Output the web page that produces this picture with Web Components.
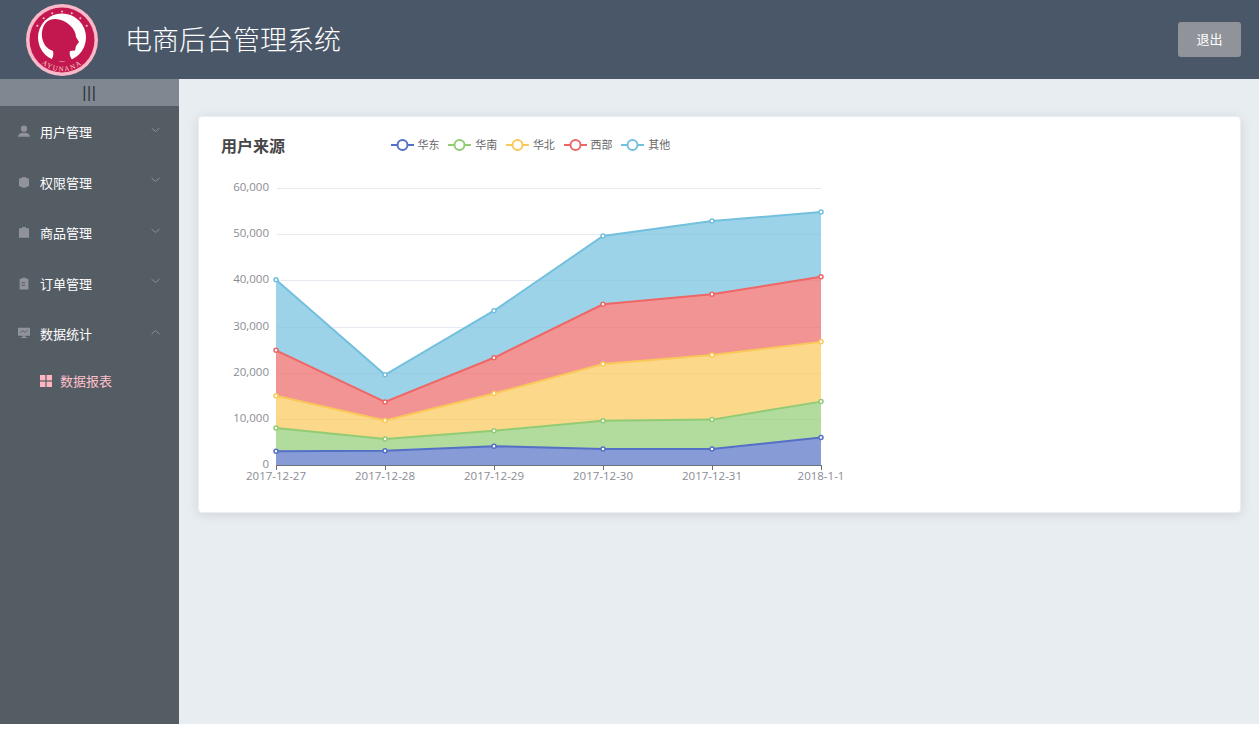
<!DOCTYPE html>
<html lang="zh">
<head>
<meta charset="utf-8">
<title>电商后台管理系统</title>
<style>
    html, body { margin: 0; padding: 0; background: #fff; }
    body { font-family: "Noto Sans CJK SC", "Liberation Sans", sans-serif; }
</style>
</head>
<body>
<admin-app>
    <admin-header slot="header" title="电商后台管理系统"></admin-header>
    <side-nav slot="aside">
        <nav-group icon="user" label="用户管理"></nav-group>
        <nav-group icon="box" label="权限管理"></nav-group>
        <nav-group icon="goods" label="商品管理"></nav-group>
        <nav-group icon="order" label="订单管理"></nav-group>
        <nav-group icon="data" label="数据统计" open>
            <nav-leaf label="数据报表"></nav-leaf>
        </nav-group>
    </side-nav>
    <report-card slot="main" heading="用户来源"></report-card>
</admin-app>

<script>
const CJK = '"Noto Sans CJK SC", "Liberation Sans", sans-serif';

const SERIES = [
    {name: '华东', color: '#5470c6', stack: [3100, 3200, 4200, 3600, 3600, 6100]},
    {name: '华南', color: '#91cc75', stack: [8140, 5760, 7560, 9700, 9960, 13860]},
    {name: '华北', color: '#fac858', stack: [15120, 9750, 15600, 22000, 23950, 26800]},
    {name: '西部', color: '#ee6666', stack: [24970, 13780, 23350, 34940, 37100, 40900]},
    {name: '其他', color: '#73c0de', stack: [40240, 19670, 33550, 49730, 52960, 54910]}
];
const DAYS = ['2017-12-27', '2017-12-28', '2017-12-29', '2017-12-30', '2017-12-31', '2018-1-1'];

const NAV_ICONS = {
    user: '<circle cx="6" cy="3.4" r="3.1"/><path d="M0 11.6c0-2.4 1.8-3.6 4-4.2h4c2.2.6 4 1.8 4 4.2z"/>',
    box: '<path d="M6 .6l5 1.8v7.4l-5 2-5-2V2.4z"/>',
    goods: '<path d="M4.2 2V.8h3.6V2H11v9.6H1V2z"/>',
    order: '<path d="M1.6 1.4h2.2V.4h4.4v1h2.2v10.8H1.6z"/><path d="M3.6 5h3.4v1H3.6zM3.6 7.4h3.4v1H3.6z" fill="#545c64"/>',
    data: '<path d="M0 .6h12v8H7v1.2h2v1H3v-1h2V8.6H0z"/><path d="M2.2 5.4l2.4-2 2.2 1.6 2.8-2.2" fill="none" stroke="#545c64" stroke-width=".9"/>'
};

class AdminApp extends HTMLElement {
    constructor() {
        super();
        this.attachShadow({mode: 'open'});
        this.shadowRoot.innerHTML = `
            <style>
                :host { display: flex; flex-direction: column; height: 724px; }
                .body { display: flex; flex: 1; min-height: 0; }
                .main {
                    flex: 1;
                    background: #e8edf2;
                    padding: 37px 18.5px 0;
                }
            </style>
            <slot name="header"></slot>
            <div class="body">
                <slot name="aside"></slot>
                <div class="main"><slot name="main"></slot></div>
            </div>
        `;
    }
}

class AdminHeader extends HTMLElement {
    constructor() {
        super();
        this.attachShadow({mode: 'open'});
        this.shadowRoot.innerHTML = `
            <style>
                :host {
                    display: flex;
                    align-items: center;
                    height: 79px;
                    background: #4a5768;
                    padding: 0 18px 0 26px;
                    flex: none;
                }
                h1 {
                    margin: 0 0 2px 27px;
                    flex: 1;
                    font: 300 27px/1 ${CJK};
                    color: #fff;
                }
                button {
                    width: 63px;
                    height: 35px;
                    border: none;
                    border-radius: 3px;
                    background: #909399;
                    color: #fff;
                    font: 13px ${CJK};
                    padding: 0 0 3px;
                }
            </style>
            <brand-logo></brand-logo>
            <h1>${this.getAttribute('title')}</h1>
            <button>退出</button>
        `;
    }
}

class BrandLogo extends HTMLElement {
    constructor() {
        super();
        this.attachShadow({mode: 'open'});
        let dots = '';
        for (let a = -60; a <= 60; a += 20) {
            const r = a * Math.PI / 180;
            dots += `<circle cx="${36 + 28.5 * Math.sin(r)}" cy="${36 - 28.5 * Math.cos(r)}" r="1" fill="#f7c9d4"/>`;
        }
        this.shadowRoot.innerHTML = `
            <style>
                :host { display: block; width: 72px; height: 72px; flex: none; }
                svg { display: block; }
                text { font: 7px "Liberation Serif", serif; fill: #f7d7c8; letter-spacing: 1.4px; }
            </style>
            <svg width="72" height="72" viewBox="0 0 72 72">
                <circle cx="36" cy="36" r="36" fill="#f9b9c8"/>
                <circle cx="36" cy="36" r="32.5" fill="#c2174f"/>
                <circle cx="36" cy="33.5" r="24" fill="#fff"/>
                <path d="M30 15C20 14 15 23 16 33c1 7 5 12 11 14 1 4 0 7-3 10h23c-3-4-4-7-3-10l5-.5 1-4.5 3-4-3-5c0-8-9-17-20-18z" fill="#c2174f"/>
                ${dots}
                <path id="arc" d="M6 44A31 31 0 0 0 66 44" fill="none"/>
                <text text-anchor="middle"><textPath href="#arc" startOffset="50%">AYUNANA</textPath></text>
            </svg>
        `;
    }
}

class SideNav extends HTMLElement {
    constructor() {
        super();
        this.attachShadow({mode: 'open'});
        this.shadowRoot.innerHTML = `
            <style>
                :host {
                    display: flex;
                    flex-direction: column;
                    width: 179px;
                    flex: none;
                    background: #545c64;
                }
                .toggle {
                    height: 27px;
                    background: #7f8891;
                    color: #2f3338;
                    font: 16px/28px "Liberation Sans", sans-serif;
                    letter-spacing: .6px;
                    text-align: center;
                }
                .menu { padding-top: .6px; }
            </style>
            <div class="toggle">|||</div>
            <div class="menu"><slot></slot></div>
        `;
    }
}

class NavGroup extends HTMLElement {
    constructor() {
        super();
        this.attachShadow({mode: 'open'});
        const chevron = this.hasAttribute('open') ? 'M0.5 5L4.5 1.5 8.5 5' : 'M0.5 1L4.5 4.5 8.5 1';
        this.shadowRoot.innerHTML = `
            <style>
                :host { display: block; }
                .row {
                    display: flex;
                    align-items: center;
                    height: 50.5px;
                    padding-left: 18px;
                    color: #fff;
                    font: 13px ${CJK};
                }
                .icon { width: 12px; height: 13px; fill: #909399; margin-right: 10px; }
                .label { flex: 1; }
                .arrow {
                    width: 9px;
                    height: 6px;
                    margin: -4px 19px 0 0;
                    fill: none;
                    stroke: #8a9097;
                }
            </style>
            <div class="row">
                <svg class="icon" viewBox="0 0 12 12.5">${NAV_ICONS[this.getAttribute('icon')]}</svg>
                <span class="label">${this.getAttribute('label')}</span>
                <svg class="arrow" viewBox="0 0 9 6"><path d="${chevron}"/></svg>
            </div>
            <slot></slot>
        `;
    }
}

class NavLeaf extends HTMLElement {
    constructor() {
        super();
        this.attachShadow({mode: 'open'});
        this.shadowRoot.innerHTML = `
            <style>
                :host {
                    display: flex;
                    align-items: center;
                    height: 43.6px;
                    padding-left: 40px;
                    color: #ffc0cb;
                    font: 13px ${CJK};
                }
                svg { width: 12px; height: 12px; fill: #ffb6c1; margin-right: 8px; }
            </style>
            <svg viewBox="0 0 12 12">
                <rect width="5.4" height="5.4"/>
                <rect x="6.6" width="5.4" height="5.4"/>
                <rect y="6.6" width="5.4" height="5.4"/>
                <rect x="6.6" y="6.6" width="5.4" height="5.4"/>
            </svg>
            <span>${this.getAttribute('label')}</span>
        `;
    }
}

class ReportCard extends HTMLElement {
    constructor() {
        super();
        this.attachShadow({mode: 'open'});
        this.shadowRoot.innerHTML = `
            <style>
                :host {
                    display: block;
                    background: #fff;
                    border: 1px solid #ebeef5;
                    border-radius: 4px;
                    box-shadow: 0 2px 12px rgba(0, 0, 0, .1);
                    padding: 0 21.5px 22px;
                }
                .head {
                    display: flex;
                    align-items: center;
                    height: 53px;
                }
                h2 {
                    margin: 0 0 0 1px;
                    width: 169.5px;
                    font: 700 16px/1 ${CJK};
                    color: #464646;
                    position: relative;
                    top: 1px;
                }
            </style>
            <div class="head">
                <h2>${this.getAttribute('heading')}</h2>
                <chart-legend></chart-legend>
            </div>
            <area-chart></area-chart>
        `;
    }
}

class ChartLegend extends HTMLElement {
    constructor() {
        super();
        this.attachShadow({mode: 'open'});
        const items = SERIES.map(s => `
            <div class="item">
                <svg width="23" height="12" viewBox="0 0 23 12">
                    <path d="M0 6H23" stroke="${s.color}" stroke-width="2"/>
                    <circle cx="11.5" cy="6" r="5" fill="#fff" stroke="${s.color}" stroke-width="2"/>
                </svg>
                <span>${s.name}</span>
            </div>
        `).join('');
        this.shadowRoot.innerHTML = `
            <style>
                :host {
                    display: flex;
                    gap: 8.7px;
                    position: relative;
                    top: 1px;
                    font: 11px/1 ${CJK};
                    color: #666;
                }
                .item { display: flex; align-items: center; gap: 4px; }
                svg { display: block; }
            </style>
            ${items}
        `;
    }
}

class AreaChart extends HTMLElement {
    constructor() {
        super();
        this.attachShadow({mode: 'open'});
        this.shadowRoot.innerHTML = `
            <style>
                :host { display: block; width: 640px; height: 320px; }
                svg { display: block; }
                text { font: 11.5px "Open Sans", "Liberation Sans", sans-serif; fill: #8a8c93; }
            </style>
            <svg width="640" height="320" viewBox="220 170 640 320">${this.render()}</svg>
        `;
    }

    getX(i) {
        return 276 + i * 109;
    }

    getY(value) {
        return 465.6 - value * 277 / 60000;
    }

    render() {
        let out = '';

        for (let v = 0; v <= 60000; v += 10000) {
            const y = Math.round(465 - v * 277 / 60000);
            if (v > 0) out += `<path d="M277 ${y + 0.5}H821" stroke="#e6eaf0"/>`;
            out += `<text x="269" y="${y}" text-anchor="end" dominant-baseline="middle">${v.toLocaleString('en-US')}</text>`;
        }

        SERIES.forEach((s, n) => {
            const top = s.stack.map((v, i) => `${this.getX(i)},${this.getY(v)}`);
            const below = n ? SERIES[n - 1].stack : [0, 0, 0, 0, 0, 0];
            const bottom = below.map((v, i) => `${this.getX(i)},${this.getY(v)}`).reverse();
            out += `<polygon points="${top.concat(bottom).join(' ')}" fill="${s.color}" fill-opacity=".7"/>`;
        });

        out += '<path d="M276 465.5H821" stroke="#6e7079"/>';
        DAYS.forEach((day, i) => {
            const x = this.getX(i);
            out += `<path d="M${x + 0.5} 465V470" stroke="#6e7079"/>`;
            out += `<text x="${x}" y="477" text-anchor="middle" dominant-baseline="middle">${day}</text>`;
        });

        SERIES.forEach(s => {
            const top = s.stack.map((v, i) => `${this.getX(i)},${this.getY(v)}`);
            out += `<polyline points="${top.join(' ')}" fill="none" stroke="${s.color}" stroke-width="2"/>`;
            s.stack.forEach((v, i) => {
                out += `<circle cx="${this.getX(i)}" cy="${this.getY(v)}" r="2" fill="#fff" stroke="${s.color}" stroke-width="1.5"/>`;
            });
        });

        return out;
    }
}

customElements.define('admin-app', AdminApp);
customElements.define('admin-header', AdminHeader);
customElements.define('brand-logo', BrandLogo);
customElements.define('side-nav', SideNav);
customElements.define('nav-group', NavGroup);
customElements.define('nav-leaf', NavLeaf);
customElements.define('report-card', ReportCard);
customElements.define('chart-legend', ChartLegend);
customElements.define('area-chart', AreaChart);
</script>
</body>
</html>
